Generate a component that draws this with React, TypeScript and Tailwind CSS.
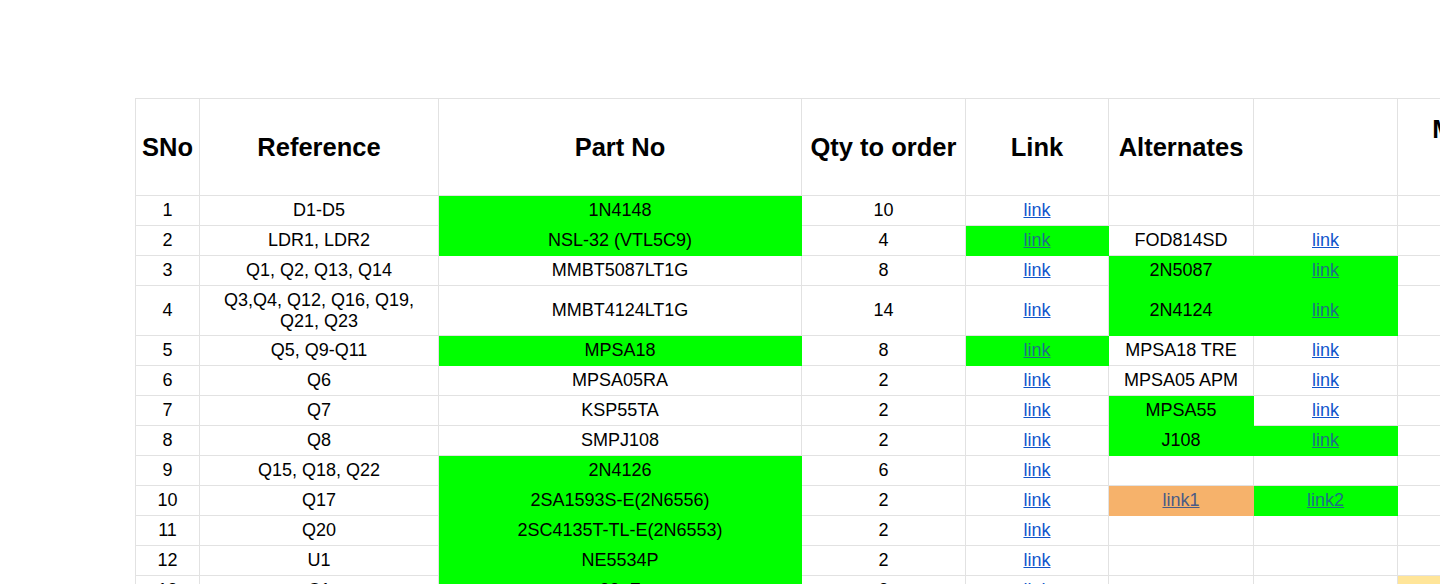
type Fill = "green" | "orange" | "yellow" | undefined;

interface Cell {
  t?: string;
  link?: boolean;
  fill?: Fill;
}

interface Row {
  h: "short" | "tall";
  cells: Cell[];
}

const fillClass = (fill: Fill) => {
  if (fill === "green") return "bg-[#00ff00] border-[#00ff00]";
  if (fill === "orange") return "bg-[#f6b26b] border-[#f6b26b]";
  if (fill === "yellow") return "bg-[#ffe599] border-[#ffe599]";
  return "bg-white border-[#e2e2e2]";
};

const linkClass = (fill: Fill) => {
  if (fill === "green") return "text-[#1f6f86] underline";
  if (fill === "orange") return "text-[#4b5b86] underline";
  return "text-[#1155cc] underline";
};

const g: Fill = "green";

const rows: Row[] = [
  { h: "short", cells: [{ t: "1" }, { t: "D1-D5" }, { t: "1N4148", fill: g }, { t: "10" }, { t: "link", link: true }, {}, {}, {}] },
  { h: "short", cells: [{ t: "2" }, { t: "LDR1, LDR2" }, { t: "NSL-32 (VTL5C9)", fill: g }, { t: "4" }, { t: "link", link: true, fill: g }, { t: "FOD814SD" }, { t: "link", link: true }, {}] },
  { h: "short", cells: [{ t: "3" }, { t: "Q1, Q2, Q13, Q14" }, { t: "MMBT5087LT1G" }, { t: "8" }, { t: "link", link: true }, { t: "2N5087", fill: g }, { t: "link", link: true, fill: g }, {}] },
  { h: "tall", cells: [{ t: "4" }, { t: "Q3,Q4, Q12, Q16, Q19, Q21, Q23" }, { t: "MMBT4124LT1G" }, { t: "14" }, { t: "link", link: true }, { t: "2N4124", fill: g }, { t: "link", link: true, fill: g }, {}] },
  { h: "short", cells: [{ t: "5" }, { t: "Q5, Q9-Q11" }, { t: "MPSA18", fill: g }, { t: "8" }, { t: "link", link: true, fill: g }, { t: "MPSA18 TRE" }, { t: "link", link: true }, {}] },
  { h: "short", cells: [{ t: "6" }, { t: "Q6" }, { t: "MPSA05RA" }, { t: "2" }, { t: "link", link: true }, { t: "MPSA05 APM" }, { t: "link", link: true }, {}] },
  { h: "short", cells: [{ t: "7" }, { t: "Q7" }, { t: "KSP55TA" }, { t: "2" }, { t: "link", link: true }, { t: "MPSA55", fill: g }, { t: "link", link: true }, {}] },
  { h: "short", cells: [{ t: "8" }, { t: "Q8" }, { t: "SMPJ108" }, { t: "2" }, { t: "link", link: true }, { t: "J108", fill: g }, { t: "link", link: true, fill: g }, {}] },
  { h: "short", cells: [{ t: "9" }, { t: "Q15, Q18, Q22" }, { t: "2N4126", fill: g }, { t: "6" }, { t: "link", link: true }, {}, {}, {}] },
  { h: "short", cells: [{ t: "10" }, { t: "Q17" }, { t: "2SA1593S-E(2N6556)", fill: g }, { t: "2" }, { t: "link", link: true }, { t: "link1", link: true, fill: "orange" }, { t: "link2", link: true, fill: g }, {}] },
  { h: "short", cells: [{ t: "11" }, { t: "Q20" }, { t: "2SC4135T-TL-E(2N6553)", fill: g }, { t: "2" }, { t: "link", link: true }, {}, {}, {}] },
  { h: "short", cells: [{ t: "12" }, { t: "U1" }, { t: "NE5534P", fill: g }, { t: "2" }, { t: "link", link: true }, {}, {}, {}] },
  { h: "short", cells: [{ t: "13" }, { t: "C1" }, { t: "22uF", fill: g }, { t: "2" }, { t: "link", link: true }, {}, {}, { fill: "yellow" }] },
];

const App = () => {
  return (
    <div className="w-[1440px] h-[584px] overflow-hidden bg-white pt-[98px] pl-[135px] font-['Liberation_Sans',Arial,sans-serif] text-black">
      <table className="table-fixed border-collapse w-[1422px]">
        <colgroup>
          <col className="w-[64px]" />
          <col className="w-[239px]" />
          <col className="w-[363px]" />
          <col className="w-[164px]" />
          <col className="w-[143px]" />
          <col className="w-[145px]" />
          <col className="w-[144px]" />
          <col className="w-[160px]" />
        </colgroup>
        <thead>
          <tr className="h-[97px]">
            {["SNo", "Reference", "Part No", "Qty to order", "Link", "Alternates", ""].map((h, i) => (
              <th
                key={i}
                className="border border-[#e2e2e2] p-0 text-center align-middle text-[25.5px] font-bold leading-[30px] whitespace-nowrap"
              >
                {h}
              </th>
            ))}
            <th className="border border-[#e2e2e2] p-0 text-center align-middle text-[25.5px] font-bold leading-[35px] whitespace-nowrap">
              Mouser
              <br />
              Cart
            </th>
          </tr>
        </thead>
        <tbody>
          {rows.map((row, r) => (
            <tr key={r} className={row.h === "tall" ? "h-[50px]" : "h-[30px]"}>
              {row.cells.map((c, i) => (
                <td
                  key={i}
                  className={`border p-0 px-2 text-center align-middle text-[18px] leading-[21px] ${fillClass(c.fill)}`}
                >
                  {c.link ? <a href="#" className={linkClass(c.fill)}>{c.t}</a> : c.t}
                </td>
              ))}
            </tr>
          ))}
        </tbody>
      </table>
    </div>
  );
};

export default App;
